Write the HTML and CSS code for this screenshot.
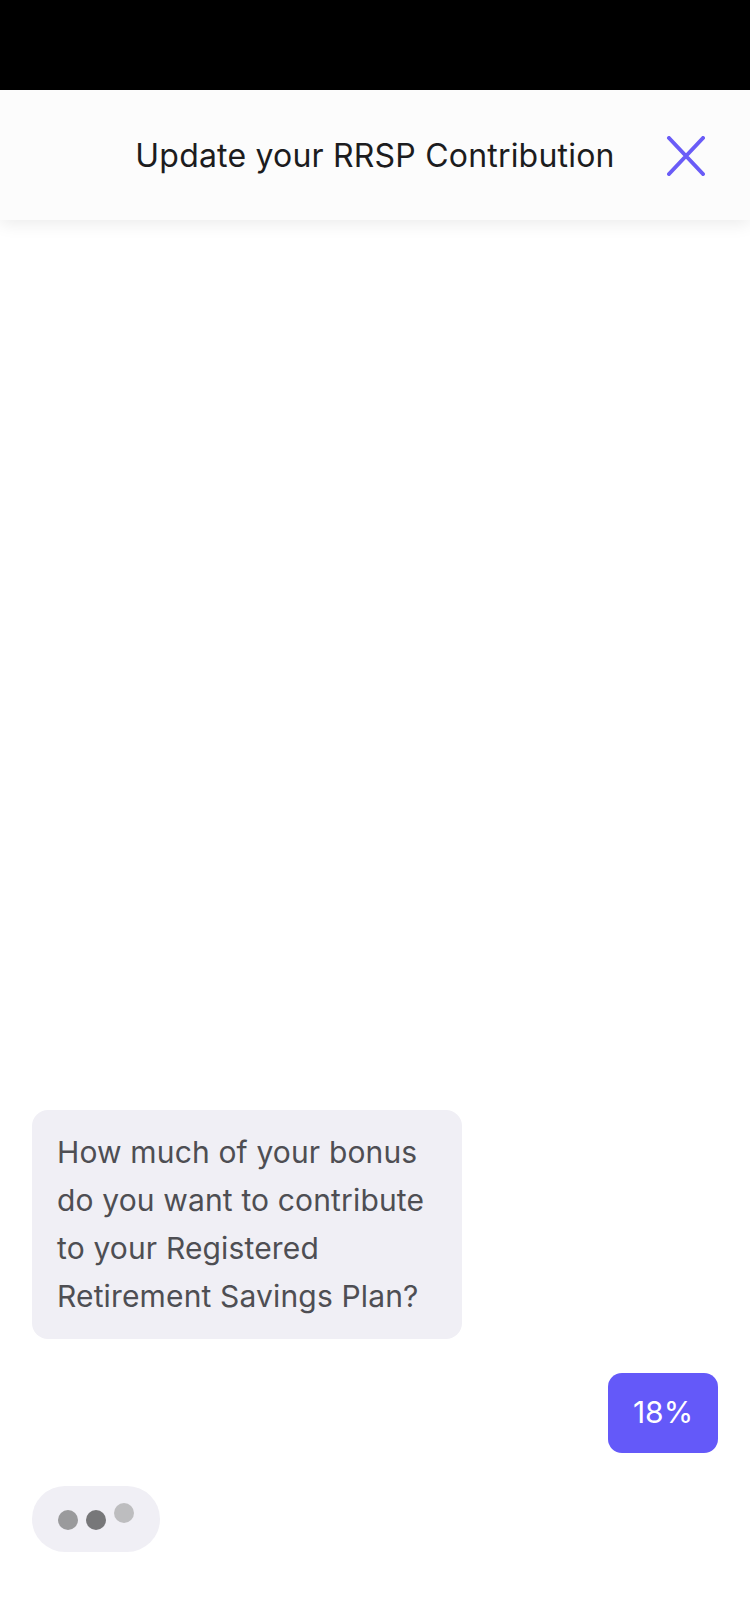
FILE: index.html
```html
<!DOCTYPE html>
<html lang="en">
<head>
<meta charset="utf-8">
<title>Update your RRSP Contribution</title>
<link rel="stylesheet" href="styles.css">
</head>
<body>
<div class="app">
  <div class="status-bar"></div>
  <header class="header">
    <h1 class="title">Update your RRSP Contribution</h1>
    <button class="close" aria-label="Close">
      <svg width="40" height="40" viewBox="0 0 40 40">
        <path d="M3 2 L37 38 M37 2 L3 38" stroke="#6a5cf7" stroke-width="4" stroke-linecap="round" fill="none"/>
      </svg>
    </button>
  </header>
  <main class="chat">
    <div class="bubble bot">How much of your bonus<br>do you want to contribute<br>to your Registered<br>Retirement Savings Plan?</div>
    <div class="bubble user">18%</div>
    <div class="typing">
      <span class="dot d1"></span>
      <span class="dot d2"></span>
      <span class="dot d3"></span>
    </div>
  </main>
</div>
</body>
</html>
```
FILE: styles.css
```css
* { box-sizing: border-box; }
html, body { margin: 0; padding: 0; background: #ffffff; }
body { font-family: Inter, "Noto Sans", "Liberation Sans", sans-serif; }

.app {
  width: 750px;
  height: 1624px;
  display: flex;
  flex-direction: column;
  overflow: hidden;
}

.status-bar {
  height: 90px;
  background: #000000;
  flex: none;
}

.header {
  position: relative;
  height: 130px;
  flex: none;
  background: #fcfcfc;
  display: flex;
  align-items: center;
  justify-content: center;
  box-shadow: 0 4px 16px rgba(0, 0, 0, 0.08);
  z-index: 1;
}

.title {
  margin: 0;
  font-size: 32px;
  font-weight: 400;
  color: #1c1c1e;
  letter-spacing: 0.2px;
  margin-top: 0;
}

.close {
  position: absolute;
  right: 44px;
  top: 46px;
  width: 40px;
  height: 40px;
  padding: 0;
  border: 0;
  background: none;
  display: flex;
}

.chat {
  flex: 1;
  display: flex;
  flex-direction: column;
  justify-content: flex-end;
  align-items: flex-start;
  padding: 0 32px 72px;
}

.bubble {
  font-size: 30px;
}

.bot {
  width: 430px;
  background: #f0eff5;
  color: #4e4e53;
  border-radius: 16px;
  padding: 18px 25px 19px;
  line-height: 48px;
  letter-spacing: 0.15px;
}

.user {
  align-self: flex-end;
  margin-top: 34px;
  width: 110px;
  height: 80px;
  background: #6459f9;
  color: #ffffff;
  border-radius: 14px;
  display: flex;
  align-items: center;
  justify-content: center;
  padding-bottom: 2px;
}

.typing {
  margin-top: 33px;
  width: 128px;
  height: 66px;
  border-radius: 33px;
  background: #f0eff5;
  display: flex;
  align-items: center;
  gap: 8px;
  padding-left: 26px;
}

.dot {
  width: 20px;
  height: 20px;
  border-radius: 50%;
  margin-top: 2px;
}
.d1 { background: #9a9a9c; }
.d2 { background: #777779; }
.d3 { background: #bdbdbf; margin-top: -12px; }
```
